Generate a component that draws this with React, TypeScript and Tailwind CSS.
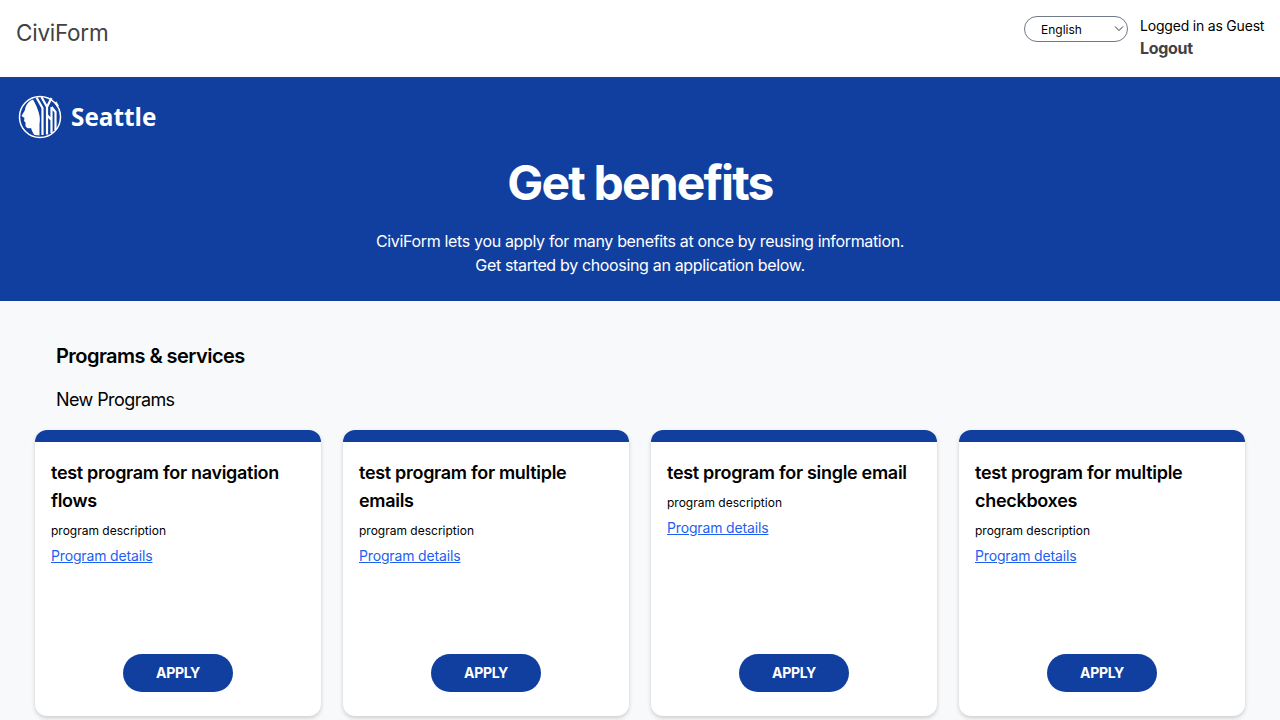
const programs = [
  'test program for navigation flows',
  'test program for multiple emails',
  'test program for single email',
  'test program for multiple checkboxes',
];

function SeattleLogo() {
  return (
    <svg width="44" height="44" viewBox="0 0 44 44" fill="none">
      <circle cx="22" cy="22" r="20.5" fill="#113f9f" stroke="white" strokeWidth="1.5" />
      {/* profile */}
      <path
        d="M15 4.5 C10 6.5 7.5 10.5 7 15 L3.5 21 L6.5 23 L6 26 L7.5 27.5 L7.5 31 C8.5 33.5 11 33.5 13 33 C14 36 15 38.5 16.5 40 L21.5 40.5 L21.5 29 C22.5 24 21.5 19 19.5 14 C18.5 11 17 8 15 4.5 Z"
        fill="white"
      />
      {/* stripes */}
      <path
        d="M18.5 2.5 L24.5 13 L24.5 40 M23.5 2 L29 12 L29 39.5 M33.5 3 L29 12 M29 20 L33.5 25 M33.5 12 L33.5 38 M33.5 12 L37.5 17 L37.5 35 M37.5 7 L40 11.5"
        stroke="white"
        strokeWidth="2.2"
      />
    </svg>
  );
}

export default function App() {
  return (
    <div className="h-[720px] overflow-hidden bg-[#f8f9fb] font-['Inter',sans-serif] text-black">
      <header className="flex h-[77px] items-start justify-between bg-white px-4 pt-4">
        <div className="text-[22.5px] leading-[33px] tracking-[-0.25px] text-[#424242]">CiviForm</div>
        <div className="flex items-start gap-3">
          <div className="relative h-[26px] w-[104px] rounded-full border border-[#71788a] bg-white pl-4 text-xs leading-[26px] text-black">
            English
            <svg className="absolute right-[3px] top-[8px]" width="10" height="8" viewBox="0 0 10 8" fill="none">
              <path d="M1 1.5 L5 5.5 L9 1.5" stroke="#333" strokeWidth="1" />
            </svg>
          </div>
          <div className="w-[124px]">
            <div className="whitespace-nowrap text-sm leading-5 tracking-[-0.2px]">Logged in as Guest</div>
            <div className="text-base font-bold leading-6 tracking-[-0.3px] text-[#424242]">Logout</div>
          </div>
        </div>
      </header>

      <section className="h-[224px] bg-[#113f9f] text-white">
        <div className="box-content flex h-[41px] items-center gap-[9px] pl-[18px] pt-[19px]">
          <SeattleLogo />
          <span className="mt-[2px] font-['Open_Sans',sans-serif] text-[24.3px] font-bold leading-none">Seattle</span>
        </div>
        <h1 className="mt-[16px] text-center text-[48px] font-bold leading-[60px] tracking-[-1.85px]">Get benefits</h1>
        <p className="mt-[16px] text-center text-base leading-6 tracking-[-0.34px]">
          CiviForm lets you apply for many benefits at once by reusing information.
          <br />
          Get started by choosing an application below.
        </p>
      </section>

      <main>
        <h2 className="pl-14 pt-[41px] text-xl font-semibold leading-7 tracking-[-0.55px]">Programs &amp; services</h2>
        <h3 className="pl-14 pt-[18px] text-lg font-normal leading-6 tracking-[-0.58px]">New Programs</h3>
        <div className="mt-[18px] flex gap-[22px] pl-[35px]">
          {programs.map((name) => (
            <div
              key={name}
              className="flex h-[286px] w-[286px] flex-col overflow-hidden rounded-xl bg-white shadow-[0_2px_4px_rgba(0,0,0,0.18)]"
            >
              <div className="h-3 bg-[#113f9f]" />
              <div className="flex flex-1 flex-col px-4 pb-[24px] pt-[17px]">
                <div className="text-lg font-semibold leading-7 tracking-[-0.3px]">{name}</div>
                <div className="mt-[8px] text-xs leading-4">program description</div>
                <a href="#" className="mt-[7px] text-sm leading-5 tracking-[-0.15px] text-[#1d5ff0] underline">
                  Program details
                </a>
                <button className="mx-auto mt-auto h-[38px] w-[110px] rounded-full bg-[#113f9f] text-sm font-bold tracking-[-0.3px] text-white">
                  APPLY
                </button>
              </div>
            </div>
          ))}
        </div>
      </main>
    </div>
  );
}
